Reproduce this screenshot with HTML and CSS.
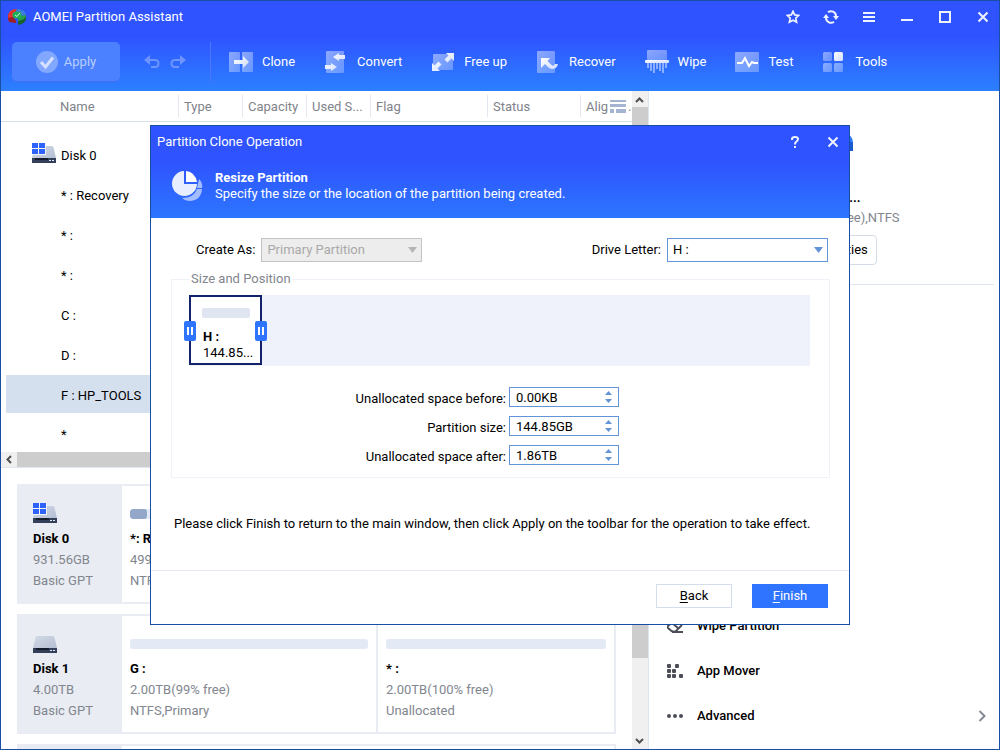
FILE: index.html
```html
<!DOCTYPE html>
<html lang="en">
<head>
<meta charset="utf-8">
<title>AOMEI Partition Assistant</title>
<link rel="stylesheet" href="styles.css">
</head>
<body>
<svg width="0" height="0" class="defs" aria-hidden="true">
  <defs>
    <linearGradient id="pale" x1="0" y1="0" x2="1" y2="1"><stop offset="0" stop-color="#fff" stop-opacity=".45"/><stop offset="1" stop-color="#fff" stop-opacity=".28"/></linearGradient>
    <linearGradient id="bright" x1="0" y1="0" x2="1" y2="1"><stop offset="0" stop-color="#fff"/><stop offset="1" stop-color="#cfdcff"/></linearGradient>
    <linearGradient id="metal" x1="0" y1="0" x2="1" y2="1"><stop offset="0" stop-color="#d3dae6"/><stop offset="1" stop-color="#b4bfd4"/></linearGradient>
    <symbol id="drive" viewBox="0 0 24 20">
      <path d="M4 3h16q1 0 1.500 1.500L24 15H0L2.500 4.500Q3 3 4 3z" fill="url(#metal)"/>
      <path d="M0 15h24v5H0z" fill="#343f59"/><path d="M3 15h13v2H3z" fill="#151c2c"/>
      <path d="M17 17h2v1h-2zM20 17h2v1h-2z" fill="#dfe9ff"/>
    </symbol>
    <symbol id="windrive" viewBox="0 0 24 20">
      <path d="M4 3h16q1 0 1.500 1.500L24 15H0L2.500 4.500Q3 3 4 3z" fill="url(#metal)"/>
      <path d="M0 0h14v12H0z" fill="#f2f4f8"/>
      <path d="M0 0h6v5H0zM7 0h6v5H7zM0 6h6v5H0zM7 6h6v5H7z" fill="#2d62fb"/>
      <path d="M0 15h24v5H0z" fill="#343f59"/><path d="M3 15h13v2H3z" fill="#151c2c"/>
      <path d="M17 17h2v1h-2zM20 17h2v1h-2z" fill="#dfe9ff"/>
    </symbol>
    <symbol id="close" viewBox="0 0 12 12"><path d="M1.500 1.500l9 9M10.500 1.500l-9 9" stroke="#eef2ff" stroke-width="2" fill="none"/></symbol>
    <symbol id="grip" viewBox="0 0 12 20"><rect width="12" height="20" rx="2" fill="#2e74ff"/><path d="M3 6h2v8H3zM7 6h2v8H7z" fill="#fff"/></symbol>
    <symbol id="spin" viewBox="0 0 7 12"><path d="M0 4l3.500-4L7 4zM0 8h7l-3.500 4z" fill="#6393d8"/></symbol>
  </defs>
</svg>

<div class="window">
  <header class="top">
    <div class="titlebar">
      <svg class="logo" width="18" height="16" viewBox="0 0 18 16">
        <path d="M0 8Q0 0 9 0L7 5 5 8l3 4-6 1Q0 12 0 8z" fill="#e0342f"/>
        <path d="M0 9l5-1 3 4v2l-7-1z" fill="#9d1f24"/>
        <path d="M9 0q8 0 9 6l-6 1-5-3z" fill="#3b7fd8"/>
        <path d="M18 6q1 7-8 8V9l3-2z" fill="#2aa04c"/>
        <path d="M10 12q7-1 8-5v3q-1 5-8 6z" fill="#17622f"/>
        <ellipse cx="9" cy="6" rx="4.500" ry="3.500" fill="#1fae57"/>
        <path d="M7 6l2 1.500L12 4" stroke="#c9ffd9" fill="none"/>
      </svg>
      <h1 class="app-name">AOMEI Partition Assistant</h1>
      <div class="win-buttons">
        <button aria-label="Favorite"><svg width="14" height="14" viewBox="0 0 14 14"><path d="M7 1.300l1.700 3.600 4 .5-2.900 2.700.8 4L7 10.200l-3.600 1.900.8-4L1.300 5.400l4-.5z" fill="none" stroke="#eef2ff" stroke-width="1.700"/></svg></button>
        <button aria-label="Refresh"><svg width="16" height="14" viewBox="0 0 16 14"><path d="M5 2.200A5 5 0 0 1 13 6M11 11.800A5 5 0 0 1 3 8" fill="none" stroke="#eef2ff" stroke-width="2"/><path d="M10 6h6l-3 4zM0 8h6L3 4z" fill="#eef2ff"/></svg></button>
        <button aria-label="Menu"><svg width="12" height="12" viewBox="0 0 12 12"><path d="M0 2h12M0 6h12M0 10h12" stroke="#eef2ff" stroke-width="2"/></svg></button>
        <button aria-label="Minimize"><svg width="12" height="12" viewBox="0 0 12 12"><path d="M0 9h12" stroke="#eef2ff" stroke-width="2"/></svg></button>
        <button aria-label="Maximize"><svg width="12" height="12" viewBox="0 0 12 12"><rect x="1" y="1" width="10" height="10" fill="none" stroke="#eef2ff" stroke-width="2"/></svg></button>
        <button aria-label="Close"><svg width="12" height="12"><use href="#close"/></svg></button>
      </div>
    </div>
    <div class="toolbar">
      <button class="apply" disabled>
        <svg width="22" height="22" viewBox="0 0 22 22"><circle cx="11" cy="11" r="11" fill="#fff" fill-opacity=".3"/><path d="M5 11l4.500 5L17 6.500" fill="none" stroke="#d5e1ff" stroke-width="3"/></svg>
        Apply
      </button>
      <div class="history">
        <button disabled aria-label="Undo"><svg width="16" height="14" viewBox="0 0 16 14"><path d="M3 5h8q3.500 0 3.500 3.500T11 12H7" fill="none" stroke="#6d94ff" stroke-width="2"/><path d="M0 5l6-5v10z" fill="#6d94ff"/></svg></button>
        <button disabled aria-label="Redo"><svg width="16" height="14" viewBox="0 0 16 14"><path d="M13 5H5Q1.500 5 1.500 8.500T5 12h4" fill="none" stroke="#6d94ff" stroke-width="2"/><path d="M16 5l-6-5v10z" fill="#6d94ff"/></svg></button>
      </div>
      <nav class="tools">
        <button><svg width="24" height="24" viewBox="0 0 24 24"><rect y="2" width="11" height="20" rx="1" fill="url(#pale)"/><rect x="13" y="2" width="11" height="20" rx="1" fill="url(#pale)"/><path d="M5 10h9V6l6 6-6 6v-4H5z" fill="url(#bright)"/></svg>Clone</button>
        <button><svg width="24" height="24" viewBox="0 0 24 24"><rect x="2" y="1" width="18" height="22" rx="1" fill="url(#pale)"/><path d="M21 5h-6V3L9 7l6 4V9h6zM1 15h6v-2l6 4-6 4v-2H1z" fill="url(#bright)"/></svg>Convert</button>
        <button><svg width="24" height="24" viewBox="0 0 24 24"><rect x="2" y="4" width="20" height="16" rx="1" fill="url(#pale)"/><path d="M15 3h8v8l-2.500-2.500-4 4-3-3 4-4zM9 21H1v-8l2.500 2.500 4-4 3 3-4 4z" fill="url(#bright)"/></svg>Free up</button>
        <button><svg width="24" height="24" viewBox="0 0 24 24"><rect x="1" y="1" width="18" height="22" rx="1" fill="url(#pale)"/><path d="M5 8h9l-2.500 3 4 4q2 2 3.500-1h3q-1 5-6 5-3 0-5-3l-2-2-4 4z" fill="url(#bright)"/></svg>Recover</button>
        <button><svg width="24" height="24" viewBox="0 0 24 24"><rect x="2" width="20" height="10" rx="1" fill="url(#pale)"/><rect y="10" width="24" height="3" rx="1" fill="url(#bright)"/><path d="M3 13v5M6 13v8M9 13v10M12 13v6M15 13v8M18 13v10M21 13v5" stroke="#fff" stroke-opacity=".45" stroke-width="2"/></svg>Wipe</button>
        <button><svg width="24" height="24" viewBox="0 0 24 24"><rect y="2" width="24" height="20" rx="1" fill="url(#pale)"/><path d="M2 13h5l3-5 4 8 3-4 2 1h4" fill="none" stroke="#fff" stroke-width="2"/></svg>Test</button>
        <button><svg width="24" height="24" viewBox="0 0 24 24"><g fill="url(#pale)"><rect x="1" y="2" width="9" height="9" rx="1.500"/><rect x="1" y="13" width="9" height="9" rx="1.500"/><rect x="12" y="13" width="9" height="9" rx="1.500"/></g><rect x="12" y="2" width="9" height="9" rx="1.500" fill="url(#bright)"/></svg>Tools</button>
      </nav>
    </div>
  </header>

  <div class="body">
    <main class="disks">
      <section class="list-pane">
        <div class="list">
          <table>
            <colgroup><col class="c-name"><col class="c-mid"><col class="c-mid"><col class="c-mid"><col class="c-flag"><col class="c-status"><col></colgroup>
            <thead><tr><th class="name">Name</th><th>Type</th><th>Capacity</th><th>Used S...</th><th>Flag</th><th>Status</th><th><div class="cut"><span>Alig</span><svg width="16" height="13" viewBox="0 0 16 13"><path d="M0 0h16v2H0zM0 4h16v3H0zM0 9h4v4H0zM6 9h10v4H6z" fill="#a5b5d1"/></svg><span>.</span></div></th></tr></thead>
            <tbody>
              <tr class="disk"><td colspan="7"><div class="cell"><svg width="24" height="20"><use href="#windrive"/></svg>Disk 0</div></td></tr>
              <tr><td colspan="7"><div class="cell">* : Recovery</div></td></tr>
              <tr><td colspan="7"><div class="cell">* :</div></td></tr>
              <tr><td colspan="7"><div class="cell">* :</div></td></tr>
              <tr><td colspan="7"><div class="cell">C :</div></td></tr>
              <tr><td colspan="7"><div class="cell">D :</div></td></tr>
              <tr><td colspan="7"><div class="cell selected">F : HP_TOOLS</div></td></tr>
              <tr class="last"><td colspan="7"><div class="cell">*</div></td></tr>
            </tbody>
          </table>
          <div class="hscroll"><svg width="16" height="15" viewBox="0 0 16 15"><path d="M10 4L6.500 7.500 10 11" fill="none" stroke="#505050" stroke-width="2"/></svg><div class="thumb"></div></div>
        </div>
        <div class="vscroll"><svg width="16" height="16" viewBox="0 0 16 16"><path d="M4 11l3.500-3.500L11 11" fill="none" stroke="#505050" stroke-width="2"/></svg><div class="thumb"></div></div>
      </section>

      <section class="map-pane">
        <div class="cards">
          <article class="card">
            <div class="summary"><svg width="24" height="20"><use href="#windrive"/></svg><strong>Disk 0</strong><span>931.56GB</span><span>Basic GPT</span></div>
            <div class="part wide"><div class="bar"><div class="used"></div></div><strong>*: Recovery</strong><span>499.00MB</span><span>NTFS</span></div>
          </article>
          <article class="card">
            <div class="summary"><svg width="24" height="20"><use href="#drive"/></svg><strong>Disk 1</strong><span>4.00TB</span><span>Basic GPT</span></div>
            <div class="part wide"><div class="bar"></div><strong>G :</strong><span>2.00TB(99% free)</span><span>NTFS,Primary</span></div>
            <div class="part"><div class="bar"></div><strong>* :</strong><span>2.00TB(100% free)</span><span>Unallocated</span></div>
          </article>
          <article class="card"><div class="summary"></div><div class="part"></div></article>
        </div>
        <div class="vscroll"><div class="thumb"></div><svg width="16" height="16" viewBox="0 0 16 16"><path d="M4 6l3.500 3.500L11 6" fill="none" stroke="#505050" stroke-width="2"/></svg></div>
      </section>
    </main>

    <aside class="side">
      <div class="info">
        <svg width="54" height="46" viewBox="0 0 54 46"><path d="M0 24V16Q0 8 7 8H44Q54 9 54 18V25H0z" fill="#2e7bff"/><path d="M0 17h54v9H0z" fill="#1a5cd0"/></svg>
        <strong>F:HP_TO...</strong>
        <span>(100% free),NTFS</span>
        <button>Properties</button>
      </div>
      <nav class="actions">
        <button><svg width="16" height="16" viewBox="0 0 16 16"><path d="M4.500 13L1 10q-1-1 0-2l7-6q1-1 2 0l4 4q1 1 0 2l-6 6zM5 14h11M5 5l6 5" fill="none" stroke="#4b4e57" stroke-width="2"/></svg>Wipe Partition</button>
        <button><svg width="16" height="16" viewBox="0 0 16 16" fill="#4b4e57"><rect x="0" y="1" width="4" height="4" rx="1"/><rect x="8" y="1" width="4" height="4" rx="1"/><rect x="0" y="6" width="4" height="4" rx="1"/><rect x="5" y="6" width="4" height="4" rx="1"/><rect x="0" y="11" width="4" height="4" rx="1"/><rect x="5" y="11" width="4" height="4" rx="1"/><rect x="12" y="11" width="4" height="4" rx="1"/></svg>App Mover</button>
        <button><svg width="16" height="16" viewBox="0 0 16 16" fill="#4b4e57"><circle cx="2" cy="8" r="2"/><circle cx="8" cy="8" r="2"/><circle cx="14" cy="8" r="2"/></svg>Advanced<svg class="more" width="8" height="12" viewBox="0 0 8 12"><path d="M1.500 1L6.500 6l-5 5" fill="none" stroke="#858994" stroke-width="2"/></svg></button>
      </nav>
    </aside>
  </div>
</div>

<div class="overlay">
  <form class="dialog" role="dialog" aria-labelledby="dlg-title">
    <header class="dlg-head">
      <div class="dlg-title">
        <h2 id="dlg-title">Partition Clone Operation</h2>
        <div class="win-buttons">
          <button type="button" aria-label="Help"><svg width="10" height="12" viewBox="0 0 10 12"><path d="M2 4V3q0-2 3-2t3 2q0 1.500-1.500 2.500T5 8.500M5 10v2" fill="none" stroke="#eef2ff" stroke-width="2"/></svg></button>
          <button type="button" aria-label="Close"><svg width="12" height="12"><use href="#close"/></svg></button>
        </div>
      </div>
      <div class="intro">
        <svg width="31" height="30" viewBox="0 0 31 30"><path d="M27 8q4 4 3 9h-5zM30 18q-1 12-13 12-4 0-7-3 12 0 15-9z" fill="#a3bdff"/><path d="M12 0v13h13A12.500 12.500 0 1 1 12 0z" fill="#e8eeff"/><path d="M14 0q9 1 11 11H14z" fill="#fff"/></svg>
        <div><strong>Resize Partition</strong><p>Specify the size or the location of the partition being created.</p></div>
      </div>
    </header>
    <div class="dlg-body">
      <div class="selects">
        <label for="as">Create As:</label>
        <div class="combo"><select id="as" disabled><option>Primary Partition</option></select><svg width="9" height="6" viewBox="0 0 9 6"><path d="M0 0h9L4.500 6z" fill="#b5b5b5"/></svg></div>
        <label for="letter" class="second">Drive Letter:</label>
        <div class="combo"><select id="letter"><option>H :</option></select><svg width="9" height="6" viewBox="0 0 9 6"><path d="M0 0h9L4.500 6z" fill="#6393d8"/></svg></div>
      </div>
      <fieldset>
        <legend>Size and Position</legend>
        <div class="track">
          <div class="block">
            <svg class="grip left" width="12" height="20"><use href="#grip"/></svg>
            <div class="fill"></div><strong>H :</strong><span>144.85...</span>
            <svg class="grip right" width="12" height="20"><use href="#grip"/></svg>
          </div>
        </div>
        <div class="sizes">
          <label for="before">Unallocated space before:</label>
          <div class="spin"><input id="before" value="0.00KB"><svg width="7" height="12"><use href="#spin"/></svg></div>
          <label for="size">Partition size:</label>
          <div class="spin"><input id="size" value="144.85GB"><svg width="7" height="12"><use href="#spin"/></svg></div>
          <label for="after">Unallocated space after:</label>
          <div class="spin"><input id="after" value="1.86TB"><svg width="7" height="12"><use href="#spin"/></svg></div>
        </div>
      </fieldset>
      <p class="note">Please click Finish to return to the main window, then click Apply on the toolbar for the operation to take effect.</p>
    </div>
    <footer><button type="button" class="back"><u>B</u>ack</button><button type="button" class="finish"><u>F</u>inish</button></footer>
  </form>
</div>
</body>
</html>
```
FILE: styles.css
```css
* { box-sizing: border-box; }
body { margin: 0; font: 13px/16px Roboto, "Liberation Sans", sans-serif; color: #000; }
button, input, select { font: inherit; color: inherit; margin: 0; }
button { background: none; border: 0; padding: 0; }
h1, h2, p { margin: 0; font-size: 13px; font-weight: 400; }
strong { font-weight: 700; }
svg { display: block; flex: none; }
.defs { position: absolute; }

.window { height: 100vh; display: flex; flex-direction: column; border: 1px solid #164fa3; background: #fff; overflow: hidden; }
.top { flex: none; height: 90px; color: #fff; background: linear-gradient(#2f54ff 40%, #2c80ff); }
.titlebar { display: flex; align-items: center; height: 32px; padding-left: 7px; gap: 7px; }
.win-buttons { display: flex; gap: 6px; margin-left: auto; }
.win-buttons button { width: 32px; height: 32px; display: grid; place-items: center; }

.toolbar { display: flex; align-items: center; height: 58px; padding: 0 0 0 11px; }
.apply { width: 108px; height: 40px; border-radius: 5px; display: flex; align-items: center; justify-content: center; gap: 6px; color: #b9ceff; background: #4b81ff; border-bottom: 1px solid #3f6fee; }
.history { display: flex; align-items: center; height: 40px; gap: 10px; padding: 0 24px; border-right: 1px solid #4c76ff; }
.tools { display: flex; gap: 29px; padding-left: 18px; }
.tools button { display: flex; align-items: center; gap: 9px; white-space: nowrap; }

.body { flex: 1; min-height: 0; display: grid; grid-template-columns: minmax(0, 1fr) 350px; }
.disks { display: flex; flex-direction: column; min-height: 0; min-width: 0; }
.list-pane { display: flex; border-bottom: 1px solid #dfe5f1; }
.list { flex: 1; min-width: 0; overflow: hidden; }
table { width: 100%; table-layout: fixed; border-collapse: collapse; }
.c-name { width: 178px; } .c-mid { width: 64px; } .c-flag { width: 117px; } .c-status { width: 93px; }
thead tr { height: 30px; border-bottom: 1px solid #d8deec; }
th { padding: 2px 0 0 5px; font-weight: 400; text-align: left; color: #7f838b; white-space: nowrap; }
th:not(:last-child) { background: linear-gradient(#e2e6f1, #e2e6f1) right center / 1px 22px no-repeat; }
th.name { padding-left: 59px; }
.cut { display: flex; align-items: center; gap: 2px; }
td { padding: 0; height: 40px; }
.cell { height: 38px; display: flex; align-items: center; margin-left: 5px; padding: 4px 0 0 55px; }
tbody::before { content: ""; display: block; height: 12px; }
.last td { height: 38px; }
.disk .cell { padding-left: 26px; gap: 5px; }
.disk svg { margin-bottom: 6px; }
.selected { background: #d5e0ef; }
.hscroll { display: flex; height: 15px; background: #f0f0f0; }
.hscroll .thumb { flex: 1; background: #cdcdcd; }
.vscroll { flex: none; width: 17px; background: #f0f0f0; border-right: 1px solid #dde4f2; display: flex; flex-direction: column; }
.vscroll .thumb { background: #cdcdcd; height: 190px; }

.map-pane { flex: 1; min-height: 0; display: flex; overflow: hidden; }
.map-pane .vscroll { justify-content: space-between; }
.cards { flex: 1; min-width: 0; padding: 16px 16px 0 16px; display: flex; flex-direction: column; gap: 10px; }
.card { flex: none; height: 120px; display: flex; border: 2px solid #e9ecf3; }
.card span { color: #82868e; }
.card strong, .card span { line-height: 21px; white-space: nowrap; }
.summary { width: 103px; background: #e9ecf3; padding: 17px 0 0 14px; display: flex; flex-direction: column; }
.summary svg { margin-bottom: 5px; }
.part { flex: 1; min-width: 0; padding: 23px 8px 0; display: flex; flex-direction: column; }
.part.wide { flex: 0 0 254px; }
.part + .part { border-left: 2px solid #e9ecf3; }
.bar { height: 10px; border-radius: 3px; background: #e3eaf6; margin-bottom: 9px; overflow: hidden; }
.used { width: 17px; height: 10px; border-radius: 3px; background: #93a8c9; }

.side { display: flex; flex-direction: column; padding: 0 5px 0 0; }
.info { height: 194px; border-bottom: 1px solid #dfe5f1; padding: 34px 0 0 150px; display: flex; flex-direction: column; align-items: flex-start; }
.info strong { margin: 19px 0 4px; }
.info span { color: #82868e; margin-bottom: 9px; }
.info button { height: 30px; border: 1px solid #d5dbea; border-radius: 4px; padding: 0 8px; }
.actions { margin-top: auto; padding: 0 8px 11px 18px; }
.actions button { width: 100%; height: 45px; display: flex; align-items: center; gap: 14px; font-weight: 500; }
.more { margin-left: auto; }

.overlay { position: fixed; inset: 0; display: grid; place-items: center; }
.dialog { width: 700px; height: 500px; border: 1px solid #164fa3; background: #fff; display: flex; flex-direction: column; }
.dlg-head { height: 92px; color: #fff; background: linear-gradient(#2f54ff 40%, #2c76ff); }
.dlg-title { display: flex; align-items: center; height: 32px; padding-left: 6px; }
.intro { display: flex; align-items: center; gap: 12px; padding: 12px 0 0 21px; }
.dlg-body { flex: 1; padding: 20px 19px 0 20px; }
.selects { display: flex; align-items: center; justify-content: flex-end; padding-right: 2px; }
.selects label { margin-right: 6px; }
.selects .second { margin-left: auto; }
.selects label:first-child { margin-left: 25px; }
.combo { position: relative; width: 161px; }
.combo select { width: 100%; height: 24px; appearance: none; border: 1px solid #6393d8; border-radius: 0; background: #fff; padding: 0 5px; }
.combo select:disabled { border-color: #c3c3c3; background: #ededed; color: #a9a9a9; opacity: 1; }
.combo svg { position: absolute; right: 5px; top: 9px; pointer-events: none; }
fieldset { margin: 9px 0 0; border: 1px solid #f0f2f9; padding: 8px 19px 12px 17px; min-width: 0; }
legend { padding: 0 1px; margin-left: 1px; color: #82868e; }
.track { height: 71px; background: #eff2fa; }
.block { position: relative; width: 73px; height: 70px; border: 2px solid #14226a; background: #fff; padding: 11px 10px 0 11px; display: flex; flex-direction: column; white-space: nowrap; }
.fill { flex: none; height: 10px; border-radius: 2px; background: #dfe6f2; margin-bottom: 11px; }
.block strong, .block span { margin-left: 1px; }
.grip { position: absolute; top: 24px; }
.grip.left { left: -7px; }
.grip.right { right: -7px; }
.sizes { display: grid; grid-template-columns: 317px 110px; column-gap: 3px; row-gap: 9px; margin-top: 21px; align-items: center; }
.sizes label { text-align: right; padding-top: 3px; }
.spin { position: relative; height: 20px; }
.spin input { display: block; width: 100%; height: 20px; border: 1px solid #6393d8; padding: 0 6px; background: #fff; }
.spin svg { position: absolute; right: 7px; top: 4px; }
.note { margin: 38px 0 0 3px; white-space: nowrap; }
.dialog footer { height: 54px; border-top: 1px solid #e6eaf4; display: flex; justify-content: flex-end; gap: 20px; padding: 13px 21px 0 0; }
.dialog footer button { width: 76px; height: 24px; border: 1px solid #d5dcec; }
.dialog footer .finish { background: #2e74ff; border-color: #2e74ff; color: #fff; }
u { text-underline-offset: 2px; }
```
